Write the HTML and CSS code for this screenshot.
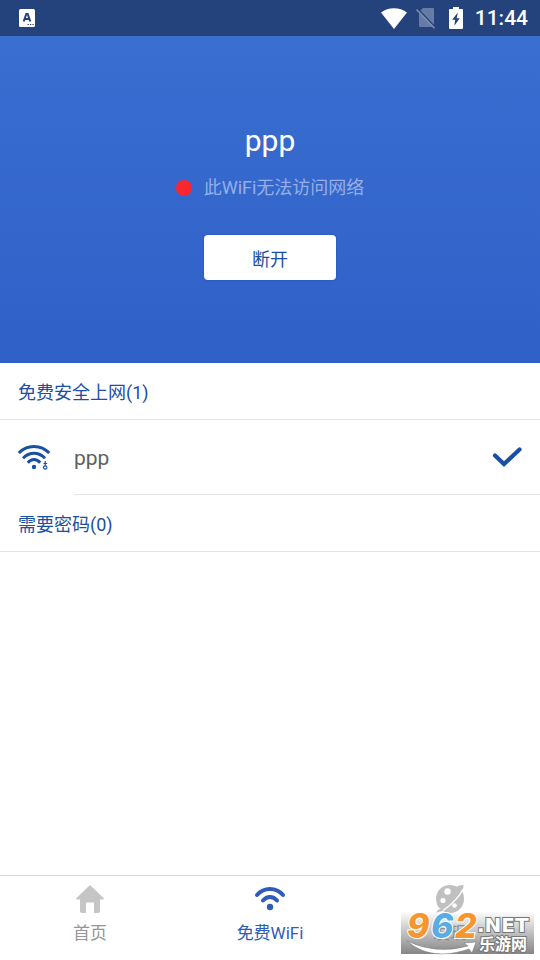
FILE: index.html
```html
<!DOCTYPE html>
<html lang="zh-CN">
<head>
<meta charset="utf-8">
<meta name="viewport" content="width=device-width, initial-scale=1">
<title>免费WiFi</title>
<link rel="stylesheet" href="styles.css">
</head>
<body>
<header class="status">
  <svg class="status-app" width="16" height="18" viewBox="0 0 16 18" aria-hidden="true">
    <rect width="16" height="18" rx="1.5" fill="#fff"/>
    <path d="M4.700 12.500 7.300 5h1.400l2.600 7.500M5.800 10h4.400" fill="none" stroke="#24427c" stroke-width="2"/>
    <path d="M8.500 15.500h1.300M11 15.500h1.300M13.400 15.500h1.300" stroke="#24427c" stroke-width="1.200"/>
  </svg>
  <div class="status-right">
    <svg width="26" height="21" viewBox="0 0 26 21" aria-hidden="true"><path d="M13 21 0 4.600C7-1.300 19-1.300 26 4.600Z" fill="#fff"/></svg>
    <svg class="sim" width="20" height="22" viewBox="0 0 20 22" aria-hidden="true">
      <path d="M7 1h10q1 0 1 1v17q0 1-1 1H4q-1 0-1-1V5Z" fill="#667ba5"/>
      <path d="M2 2 20.500 21.500" stroke="#24427c" stroke-width="1.600"/>
      <path d="M.5 2.500 18.500 21.300" stroke="#7c8fb3" stroke-width="1.600"/>
    </svg>
    <svg class="battery" width="14" height="22" viewBox="0 0 14 22" aria-hidden="true">
      <path d="M4 0h6v2h3q1 0 1 1v18q0 1-1 1H1q-1 0-1-1V3q0-1 1-1h3Z" fill="#fff"/>
      <path d="M8.800 5.500 3.200 12.800h3L5.300 18.800l5.500-7.600H7.700Z" fill="#24427c"/>
    </svg>
    <time class="clock">11:44</time>
  </div>
</header>
<main>
  <section class="hero">
    <h1>ppp</h1>
    <p class="state"><span class="dot"></span>此WiFi无法访问网络</p>
    <button class="disconnect" type="button">断开</button>
  </section>
  <h2>免费安全上网(1)</h2>
  <ul class="networks">
    <li>
      <svg class="net-icon" width="32" height="26" viewBox="0 0 32 26" aria-hidden="true">
        <g fill="none" stroke="#1950a4" stroke-width="3">
          <path d="M.8 8C9-.8 23-.8 31.200 8"/>
          <path d="M5 13.200C11.500 6.500 20.500 6.500 27 13.200"/>
          <path d="M9.800 17.700C13.500 13.500 18.500 13.500 22.200 17.700"/>
        </g>
        <circle cx="16" cy="22" r="2.200" fill="#1950a4"/>
        <g fill="none" stroke="#1950a4" stroke-width="1.200"><circle cx="27.200" cy="22.500" r="1.700"/><path d="M27.200 21v-5M25.500 18.500h3.700"/></g>
      </svg>
      <div class="net-body">
        <span>ppp</span>
        <svg width="30" height="23" viewBox="0 0 30 23" aria-hidden="true"><path d="m3 8.500 9 8.500L27.500 2.500" fill="none" stroke="#1950a4" stroke-width="4.200" stroke-linecap="round"/></svg>
      </div>
    </li>
  </ul>
  <h2>需要密码(0)</h2>
</main>
<nav class="tabs">
  <a href="#home">
    <svg width="30" height="30" viewBox="0 0 30 30" aria-hidden="true"><path d="M15 1 29 14.500q0 1-1 1h-3V27q0 2-2 2h-4V18.500h-8V29H7q-2 0-2-2V15.500H2q-1 0-1-1Z" fill="#c5c5c5"/></svg>
    首页
  </a>
  <a class="active" href="#wifi" aria-current="page">
    <svg width="32" height="30" viewBox="0 0 32 30" aria-hidden="true">
      <g fill="none" stroke="#2f5cb8" stroke-width="4" stroke-linecap="round"><path d="M3 11C10 3 22 3 29 11M9 16.500C13 11.800 19 11.800 23 16.500"/></g>
      <circle cx="16" cy="23" r="3.200" fill="#2f5cb8"/>
    </svg>
    免费WiFi
  </a>
  <a href="#find">
    <svg width="30" height="30" viewBox="0 0 30 30" aria-hidden="true">
      <path d="M4 24Q1 20 1 15C1 7 7 1 15 1q4 0 7 1.800Q25 .5 28.500 1q.3 3-1.500 6Q29 10 29 15c0 8-6 14-14 14-3 0-5-.8-7-2l-7 1.500q1-2.500 5-4.500Z" fill="#c0c0c0"/>
      <g fill="#fff"><circle cx="12.500" cy="7.500" r="3.200"/><circle cx="8" cy="16.500" r="2.600"/><circle cx="19.500" cy="21.500" r="2.300"/></g>
      <path d="M28 5Q23 16 8 26.500" fill="none" stroke="#fff" stroke-width="1.300"/>
    </svg>
    发现
  </a>
  <div class="brand">
    <svg width="133" height="43" viewBox="0 0 133 43" role="img" aria-label="962.NET 乐游网">
      <g class="digits"><text x="6" y="27" fill="#f6962c">9</text><text x="30" y="27" fill="#58aee4">6</text><text x="54" y="27" fill="#f6962c">2</text></g>
      <path d="M6 30Q35 44 67 35l-4-3 12-1-4 11-3-4Q30 51 6 30Z" fill="#fff" stroke="#777" stroke-width=".5"/>
      <text class="net" x="76" y="21">.NET</text>
      <text class="cn" x="78" y="39">乐游网</text>
    </svg>
  </div>
</nav>
</body>
</html>
```
FILE: styles.css
```css
* { box-sizing: border-box; }

body {
  margin: 0;
  min-height: 100vh;
  display: flex;
  flex-direction: column;
  background: #fff;
  font-family: Roboto, "Noto Sans CJK SC", sans-serif;
  font-size: 18px;
}

h1, h2, p, ul { margin: 0; padding: 0; font-weight: 400; }

svg { display: block; flex: none; overflow: visible; }

.status {
  height: 36px;
  padding: 0 12px 0 19px;
  display: flex;
  align-items: center;
  justify-content: space-between;
  background: #24427c;
}

.status-right { display: flex; align-items: center; }
.sim { margin-left: 9px; }
.battery { margin: 0 12px 0 13px; }

.clock {
  color: #fff;
  font-size: 21px;
  font-weight: 500;
  line-height: 36px;
}

main { flex: 1; }

.hero {
  padding: 85px 20px 83px;
  display: flex;
  flex-direction: column;
  align-items: center;
  background: linear-gradient(#3a6ed0, #2f60c8);
}

.hero h1 {
  color: #fff;
  font-size: 30px;
  line-height: 40px;
}

.state {
  margin-top: 14px;
  display: flex;
  align-items: center;
  gap: 12px;
  color: #95afe6;
  line-height: 26px;
}

.dot {
  width: 16px;
  height: 16px;
  border-radius: 50%;
  background: #fb2730;
}

.disconnect {
  width: 132px;
  height: 45px;
  margin-top: 34px;
  padding: 0;
  border: 0;
  border-radius: 4px;
  background: #fff;
  box-shadow: 0 0 2px #234f9f;
  color: #1950a4;
  font: inherit;
}

h2 {
  height: 57px;
  padding: 2px 18px 0;
  border-bottom: 1px solid #e4e4e4;
  color: #1950a4;
  font-size: 18px;
  line-height: 56px;
}

.networks { list-style: none; }

.networks li {
  padding-left: 18px;
  display: flex;
  align-items: center;
  gap: 24px;
}

.net-body {
  flex: 1;
  height: 75px;
  padding: 2px 18px 0 0;
  display: flex;
  align-items: center;
  justify-content: space-between;
  border-bottom: 1px solid #e4e4e4;
  color: #606060;
  font-size: 21px;
}

.tabs {
  position: relative;
  height: 85px;
  padding-top: 8px;
  display: grid;
  grid-template-columns: repeat(3, 1fr);
  border-top: 1px solid #d6d6d6;
}

.tabs a {
  display: flex;
  flex-direction: column;
  align-items: center;
  gap: 7px;
  color: #969696;
  font-size: 17px;
  line-height: 24px;
  text-decoration: none;
}

.tabs .active { color: #2f5cb8; }

.brand {
  position: absolute;
  right: 6px;
  bottom: 6px;
  background: linear-gradient(rgba(150, 150, 150, 0), #858585);
}

.digits {
  font: italic 800 34px Inter, sans-serif;
  stroke: #fff;
  stroke-width: 2px;
  paint-order: stroke;
}

.net, .cn {
  fill: #fff;
  stroke: #777;
  stroke-width: 2px;
  paint-order: stroke;
}

.net { font: bold 20px "DejaVu Sans", sans-serif; }
.cn { font: bold 16px "Noto Sans CJK SC", sans-serif; }
```
